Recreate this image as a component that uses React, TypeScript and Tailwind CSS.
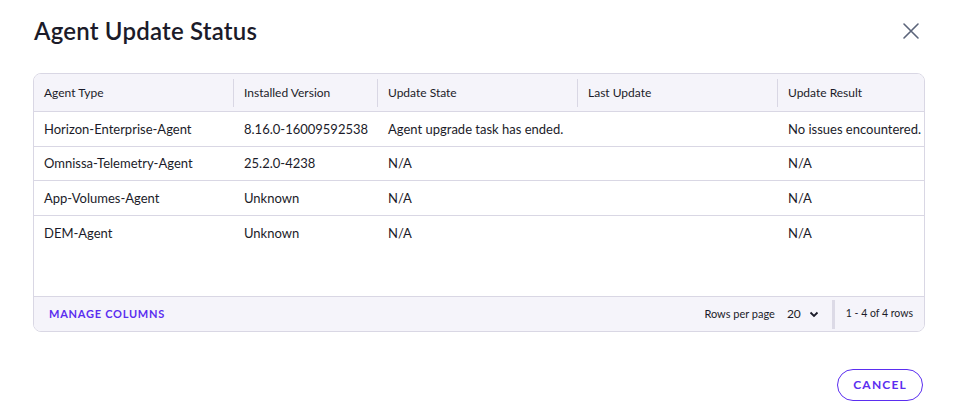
import React from "react";

const rows = [
  ["Horizon-Enterprise-Agent", "8.16.0-16009592538", "Agent upgrade task has ended.", "", "No issues encountered."],
  ["Omnissa-Telemetry-Agent", "25.2.0-4238", "N/A", "", "N/A"],
  ["App-Volumes-Agent", "Unknown", "N/A", "", "N/A"],
  ["DEM-Agent", "Unknown", "N/A", "", "N/A"],
];

const headers = ["Agent Type", "Installed Version", "Update State", "Last Update", "Update Result"];
const widths = ["w-[200px]", "w-[144px]", "w-[200px]", "w-[200px]", "flex-1"];

export default function App() {
  return (
    <div className="w-[958px] h-[419px] bg-white text-[#1b1b29] font-['Lato','Liberation_Sans',sans-serif] flex flex-col">
      <div className="flex items-start justify-between pl-[34px] pr-[38px] pt-[19px] h-[73px]">
        <h1 className="text-[24px] font-semibold tracking-[0.2px] leading-none">Agent Update Status</h1>
        <svg width="18" height="18" viewBox="0 0 18 18" className="text-[#5b647a] mt-[3px]">
          <path d="M2 2 L16 16 M16 2 L2 16" stroke="currentColor" strokeWidth="1.6" strokeLinecap="round" />
        </svg>
      </div>
      <div className="mx-[33px] border border-[#d9d7e4] rounded-[8px] overflow-hidden flex flex-col">
        <div className="flex h-[38px] bg-[#f5f4fa] border-b border-[#d9d7e4] text-[12px]">
          {headers.map((h, i) => (
            <div key={h} className={`${widths[i]} flex items-center relative pl-[10px] pt-[1px]`}>
              {h}
              {i < 4 && <span className="absolute right-0 top-[5px] bottom-[4px] w-px bg-[#d9d7e4]" />}
            </div>
          ))}
        </div>
        <div className="h-[184px] flex flex-col text-[13px]">
          {rows.map((r, ri) => (
            <div key={ri} className={`flex h-[34.5px] ${ri < 3 ? "border-b border-[#d9d7e4]" : ""}`}>
              {r.map((c, ci) => (
                <div key={ci} className={`${widths[ci]} flex items-center pl-[10px] pt-[1px] whitespace-nowrap`}>{c}</div>
              ))}
            </div>
          ))}
        </div>
        <div className="h-[35px] bg-[#f5f4fa] border-t border-[#d9d7e4] flex items-center">
          <span className="pl-[15px] text-[11px] font-bold tracking-[0.75px] text-[#5b2ef0]">MANAGE COLUMNS</span>
          <div className="flex-1" />
          <span className="text-[11px]">Rows per page</span>
          <span className="ml-[12px] text-[12px]">20</span>
          <svg width="10" height="10" viewBox="0 0 10 10" className="ml-[8px]">
            <path d="M1.5 3.5 L5 7 L8.5 3.5" fill="none" stroke="#1b1b29" strokeWidth="1.8" />
          </svg>
          <span className="ml-[13px] w-[3px] h-[29px] bg-[#dcdae6]" />
          <span className="ml-[11px] mr-[11px] text-[10.5px]">1 - 4 of 4 rows</span>
        </div>
      </div>
      <div className="flex justify-end pr-[35px] mt-[37px]">
        <button className="h-[32px] px-[15px] rounded-full border border-[#5b2ef0] text-[#5b2ef0] text-[12px] font-bold tracking-[1.2px]">
          CANCEL
        </button>
      </div>
    </div>
  );
}
